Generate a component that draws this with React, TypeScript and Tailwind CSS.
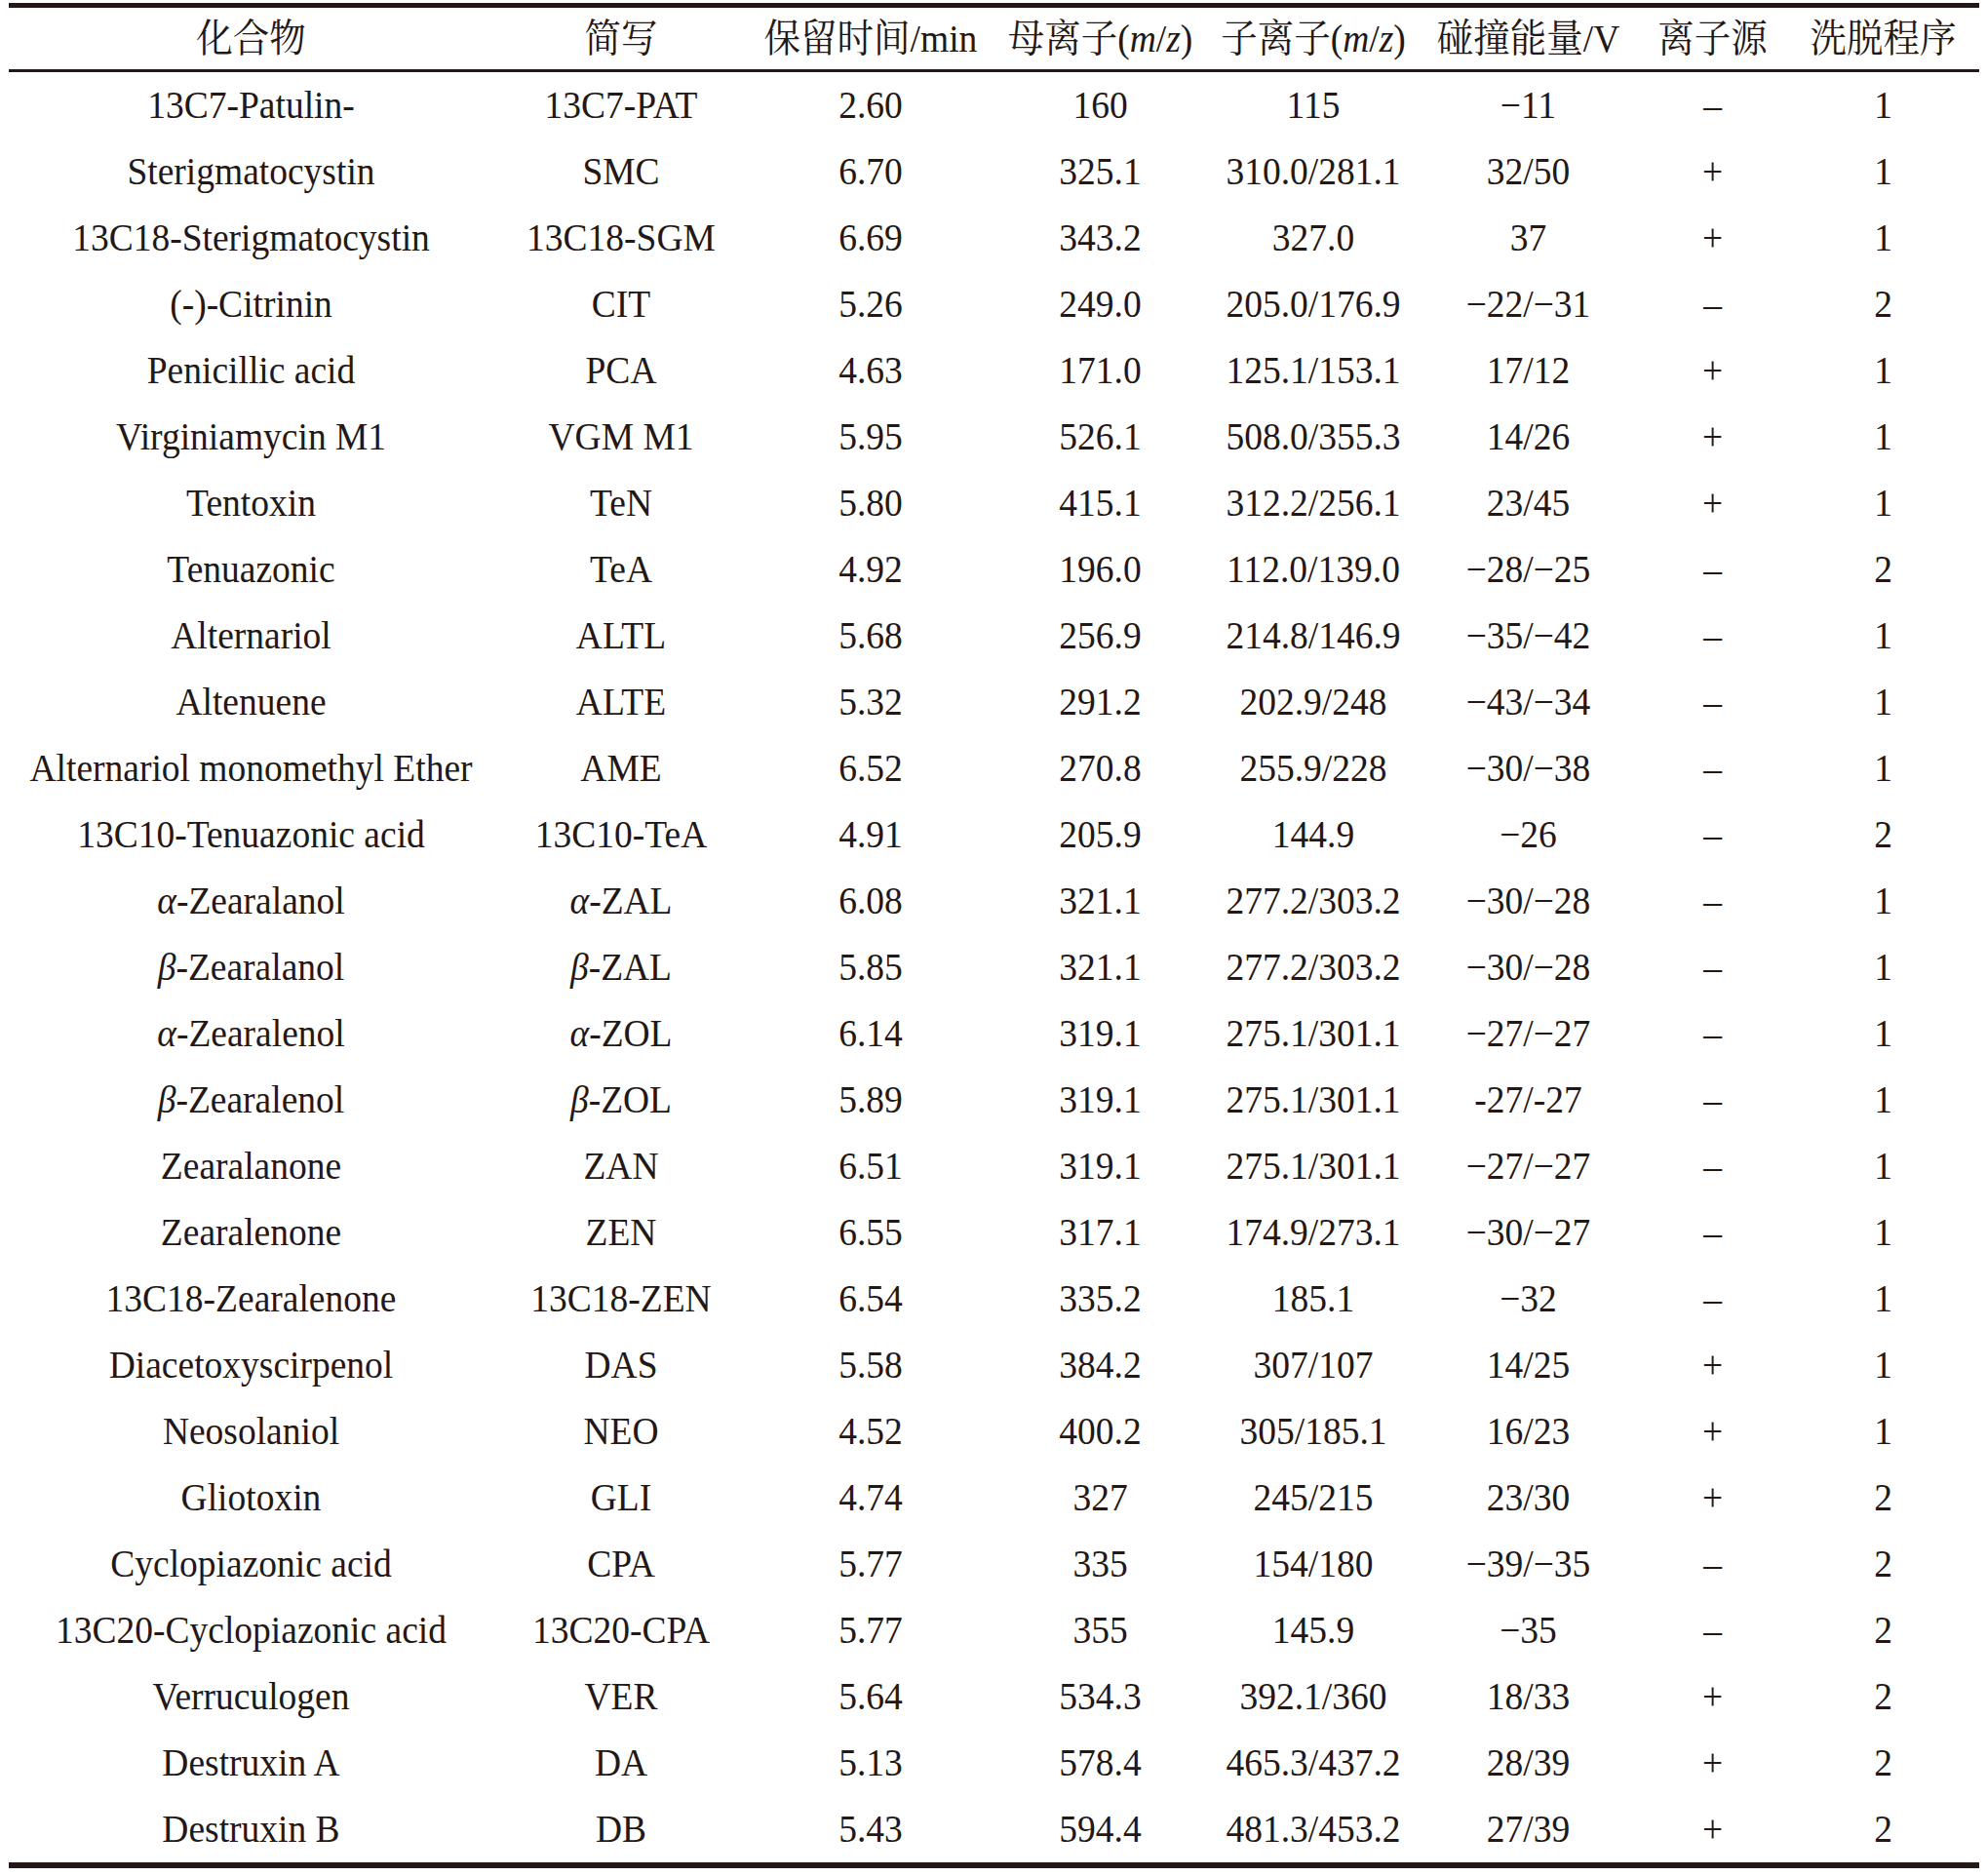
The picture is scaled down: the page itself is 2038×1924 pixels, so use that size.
import React from "react";

type Row = [React.ReactNode, React.ReactNode, string, string, string, string, string, string];

const a = <i>α</i>;
const b = <i>β</i>;

const rows: Row[] = [
  ["13C7-Patulin-", "13C7-PAT", "2.60", "160", "115", "−11", "–", "1"],
  ["Sterigmatocystin", "SMC", "6.70", "325.1", "310.0/281.1", "32/50", "+", "1"],
  ["13C18-Sterigmatocystin", "13C18-SGM", "6.69", "343.2", "327.0", "37", "+", "1"],
  ["(-)-Citrinin", "CIT", "5.26", "249.0", "205.0/176.9", "−22/−31", "–", "2"],
  ["Penicillic acid", "PCA", "4.63", "171.0", "125.1/153.1", "17/12", "+", "1"],
  ["Virginiamycin M1", "VGM M1", "5.95", "526.1", "508.0/355.3", "14/26", "+", "1"],
  ["Tentoxin", "TeN", "5.80", "415.1", "312.2/256.1", "23/45", "+", "1"],
  ["Tenuazonic", "TeA", "4.92", "196.0", "112.0/139.0", "−28/−25", "–", "2"],
  ["Alternariol", "ALTL", "5.68", "256.9", "214.8/146.9", "−35/−42", "–", "1"],
  ["Altenuene", "ALTE", "5.32", "291.2", "202.9/248", "−43/−34", "–", "1"],
  ["Alternariol monomethyl Ether", "AME", "6.52", "270.8", "255.9/228", "−30/−38", "–", "1"],
  ["13C10-Tenuazonic acid", "13C10-TeA", "4.91", "205.9", "144.9", "−26", "–", "2"],
  [<>{a}-Zearalanol</>, <>{a}-ZAL</>, "6.08", "321.1", "277.2/303.2", "−30/−28", "–", "1"],
  [<>{b}-Zearalanol</>, <>{b}-ZAL</>, "5.85", "321.1", "277.2/303.2", "−30/−28", "–", "1"],
  [<>{a}-Zearalenol</>, <>{a}-ZOL</>, "6.14", "319.1", "275.1/301.1", "−27/−27", "–", "1"],
  [<>{b}-Zearalenol</>, <>{b}-ZOL</>, "5.89", "319.1", "275.1/301.1", "-27/-27", "–", "1"],
  ["Zearalanone", "ZAN", "6.51", "319.1", "275.1/301.1", "−27/−27", "–", "1"],
  ["Zearalenone", "ZEN", "6.55", "317.1", "174.9/273.1", "−30/−27", "–", "1"],
  ["13C18-Zearalenone", "13C18-ZEN", "6.54", "335.2", "185.1", "−32", "–", "1"],
  ["Diacetoxyscirpenol", "DAS", "5.58", "384.2", "307/107", "14/25", "+", "1"],
  ["Neosolaniol", "NEO", "4.52", "400.2", "305/185.1", "16/23", "+", "1"],
  ["Gliotoxin", "GLI", "4.74", "327", "245/215", "23/30", "+", "2"],
  ["Cyclopiazonic acid", "CPA", "5.77", "335", "154/180", "−39/−35", "–", "2"],
  ["13C20-Cyclopiazonic acid", "13C20-CPA", "5.77", "355", "145.9", "−35", "–", "2"],
  ["Verruculogen", "VER", "5.64", "534.3", "392.1/360", "18/33", "+", "2"],
  ["Destruxin A", "DA", "5.13", "578.4", "465.3/437.2", "28/39", "+", "2"],
  ["Destruxin B", "DB", "5.43", "594.4", "481.3/453.2", "27/39", "+", "2"],
];

const headers: React.ReactNode[] = [
  "化合物",
  "简写",
  "保留时间/min",
  <>母离子(<i>m</i>/<i>z</i>)</>,
  <>子离子(<i>m</i>/<i>z</i>)</>,
  "碰撞能量/V",
  "离子源",
  "洗脱程序",
];

const grid =
  "grid grid-cols-[497px_262px_250px_221px_216px_225px_153px_197px]";

function Cell({ children }: { children: React.ReactNode }) {
  return (
    <div className="flex items-center justify-center h-[68px] whitespace-nowrap">
      <span className="inline-block scale-y-[1.06] leading-none">{children}</span>
    </div>
  );
}

export default function App() {
  return (
    <div
      className="bg-white min-h-[1924px] pt-[3px] text-[#231815] text-[37.5px]"
      style={{
        fontFamily:
          '"Liberation Serif", "Times New Roman", "Noto Serif CJK SC", "Noto Sans CJK SC", serif',
      }}
    >
      <div className="ml-[9px] w-[2021px] border-t-[5px] border-b-[6px] border-[#231815]">
        <div className={`${grid} border-b-[3px] border-[#231815]`}>
          {headers.map((hd, i) => (
            <div key={i} className="flex items-center justify-center h-[63px] whitespace-nowrap">
              <span className="inline-block scale-y-[1.06] leading-none">{hd}</span>
            </div>
          ))}
        </div>
        {rows.map((r, ri) => (
          <div key={ri} className={grid}>
            {r.map((c, ci) => (
              <Cell key={ci}>{c}</Cell>
            ))}
          </div>
        ))}
      </div>
    </div>
  );
}
